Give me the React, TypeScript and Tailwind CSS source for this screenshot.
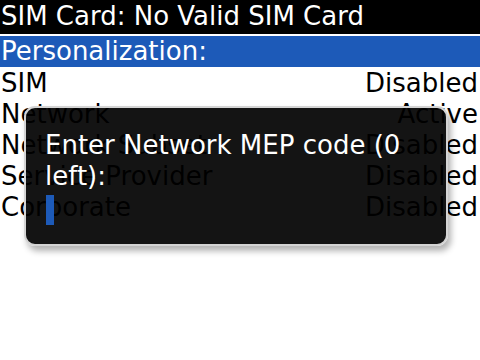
import React from "react";

const rows = [
  { label: "SIM", value: "Disabled" },
  { label: "Network", value: "Active" },
  { label: "Network Subset", value: "Disabled" },
  { label: "Service Provider", value: "Disabled" },
  { label: "Corporate", value: "Disabled" },
];

export default function App() {
  return (
    <div
      className="relative w-[480px] h-[360px] bg-white overflow-hidden text-[26px] leading-[31px]"
      style={{ fontFamily: '"DejaVu Sans", sans-serif' }}
    >
      <div className="h-[34px] bg-black text-white pl-[1px] pt-[1px]">SIM Card: No Valid SIM Card</div>
      <div className="h-[2px] bg-white" />
      <div className="h-[31px] bg-[#1d5ab8] text-white pl-[1px]">Personalization:</div>
      <div className="flex flex-col text-black pt-[1px]">
        {rows.map((r) => (
          <div key={r.label} className="flex justify-between h-[31px] pl-[1px] pr-[2px]">
            <span>{r.label}</span>
            <span>{r.value}</span>
          </div>
        ))}
      </div>

      <div className="absolute left-[24px] top-[106px] w-[424px] h-[140px] rounded-[11px] border-2 border-[#d4d4d4] bg-black/92 shadow-[3px_5px_6px_rgba(0,0,0,0.3)] pl-[19px] pt-[22px] text-white">
        <div>Enter Network MEP code (0</div>
        <div>left):</div>
        <div className="mt-[3px] ml-[1px] w-[8px] h-[30px] bg-[#1d5ab8]" />
      </div>
    </div>
  );
}
